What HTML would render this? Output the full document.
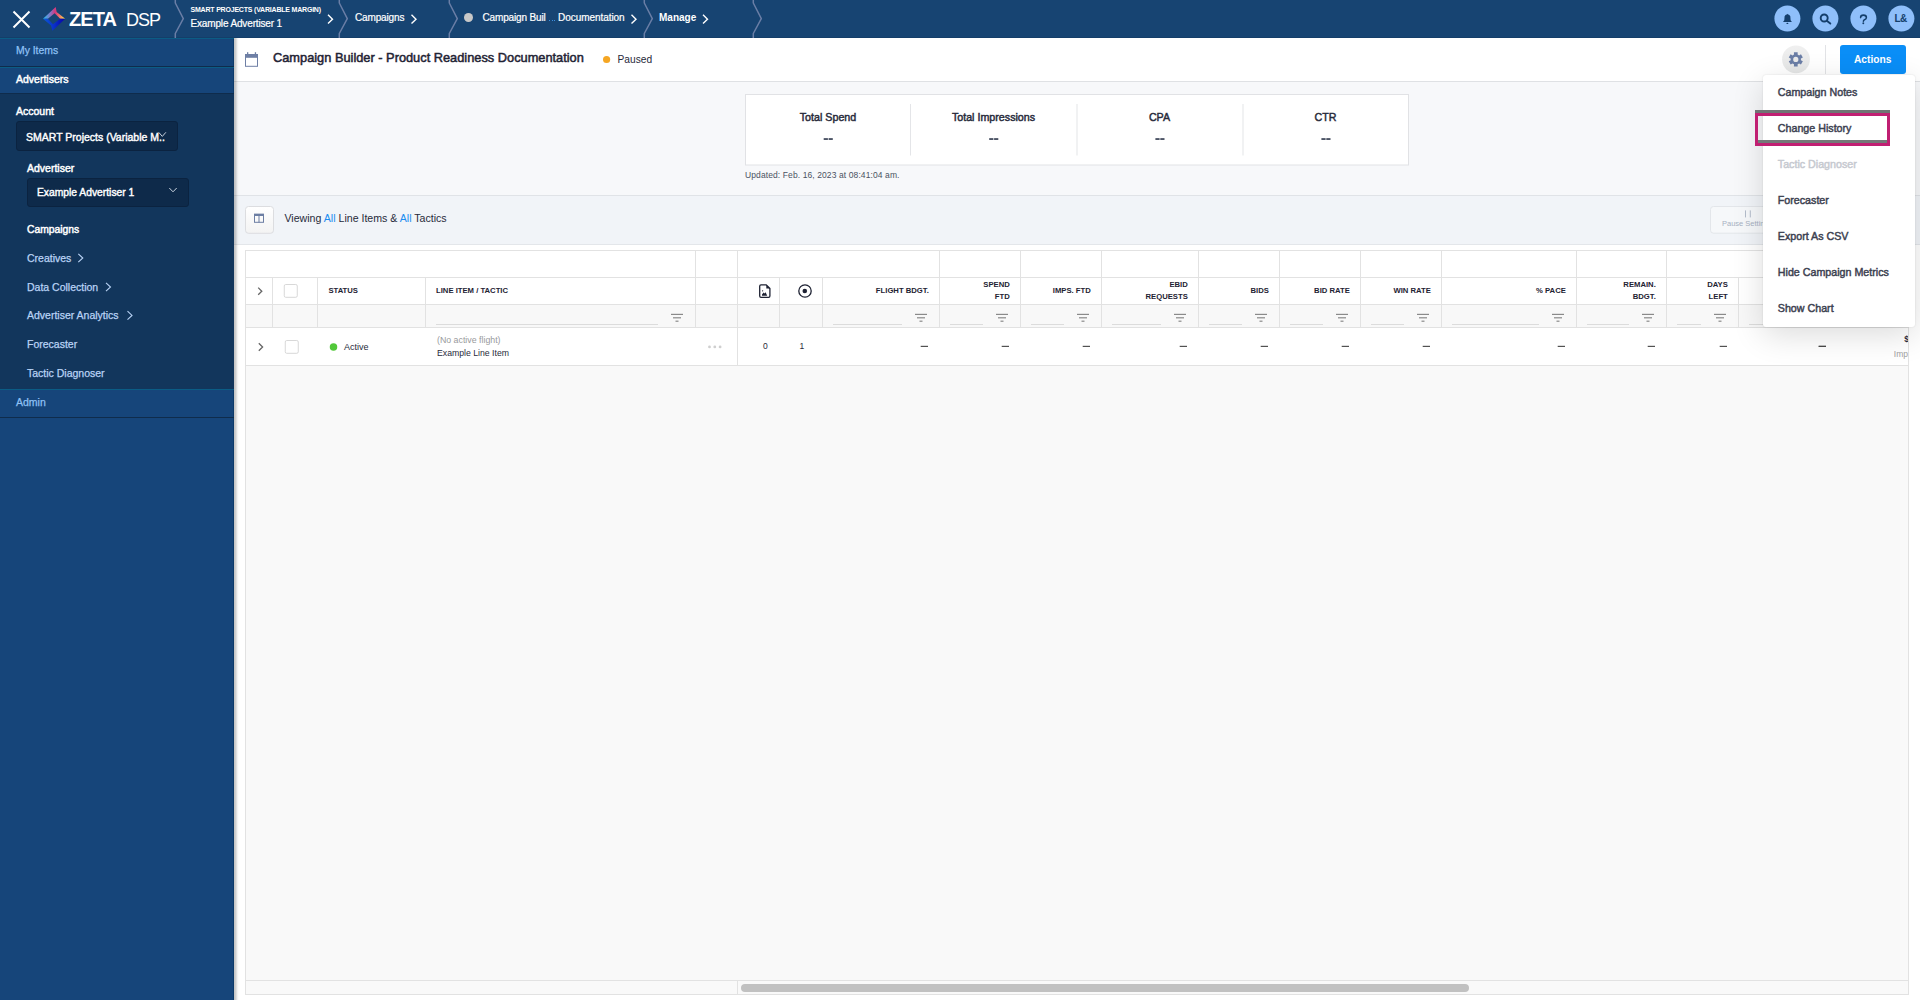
<!DOCTYPE html>
<html><head><meta charset="utf-8">
<style>
*{box-sizing:border-box;margin:0;padding:0}
html,body{width:1920px;height:1000px;overflow:hidden;background:#fff;font-family:"Liberation Sans",sans-serif;color:#272a3a}
.a{position:absolute;white-space:nowrap}
.t{line-height:1}
.c{transform:translateX(-50%)}
.h1{font-size:7.7px;font-weight:700;color:#1e2233}
.h2{font-size:7.7px;font-weight:700;color:#1e2233;line-height:12px;text-align:right}
.dd{left:1777.8px;font-size:10.7px;color:#3c4150;-webkit-text-stroke:0.45px currentColor}
#hdr{position:absolute;left:0;top:0;width:1920px;height:38px;background:#174472}
#side{position:absolute;left:0;top:38px;width:234px;height:962px;background:#16457a}
#main{position:absolute;left:234px;top:38px;width:1686px;height:962px;background:#fff}
</style></head><body>
<div id="hdr">
 <div class="a" style="left:0;top:37px;width:1920px;height:1px;background:#143e69"></div>
 <svg class="a" style="left:0;top:0" width="780" height="38" viewBox="0 0 780 38">
  <defs>
   <linearGradient id="lgT" x1="0" y1="0" x2="1" y2="0">
    <stop offset="0" stop-color="#22c4f5"/><stop offset="0.35" stop-color="#8a6fc0"/><stop offset="0.55" stop-color="#d6357a"/><stop offset="0.75" stop-color="#f07a6a"/><stop offset="1" stop-color="#fff23a"/>
   </linearGradient>
   <linearGradient id="lgB" x1="0" y1="0" x2="1" y2="0">
    <stop offset="0" stop-color="#0b5ad8"/><stop offset="0.5" stop-color="#0a2fc8"/><stop offset="1" stop-color="#0800a8"/>
   </linearGradient>
  </defs>
  <path d="M13.5 11.5 L29.5 27.5 M29.5 11.5 L13.5 27.5" stroke="#fff" stroke-width="2" fill="none"/>
  <path d="M43 18.7 L55.7 7 L56.6 12 L65.2 18.7 L60.2 18.7 L54.6 13.2 L47.9 18.7 Z" fill="url(#lgT)"/>
  <path d="M43 18.7 L47.9 18.7 L53 24.2 L60.2 18.7 L65.2 18.7 L52.4 30.7 L51 25.6 Z" fill="url(#lgB)"/>
  <g stroke="#6a7ea6" stroke-width="1.5" fill="none" stroke-linejoin="round"><path d="M175.3 -1 L175.3 3 L183.3 18.7 L175.3 33.5 L175.3 39"/><path d="M339.3 -1 L339.3 3 L347.3 18.7 L339.3 33.5 L339.3 39"/><path d="M449.3 -1 L449.3 3 L457.3 18.7 L449.3 33.5 L449.3 39"/><path d="M644.3 -1 L644.3 3 L652.3 18.7 L644.3 33.5 L644.3 39"/><path d="M753.3 -1 L753.3 3 L761.3 18.7 L753.3 33.5 L753.3 39"/></g>
  <g stroke="#fff" stroke-width="1.4" fill="none">
   <path d="M328 14.8 L332.5 19.2 L328 23.6"/>
   <path d="M411.5 14.8 L416 19.2 L411.5 23.6"/>
   <path d="M631.5 14.8 L636 19.2 L631.5 23.6"/>
   <path d="M703 14.8 L707.5 19.2 L703 23.6"/>
  </g>
  <circle cx="468.5" cy="17.5" r="4.5" fill="#c8c8c8"/>
 </svg>
 <div class="a t" style="left:69px;top:9px;font-size:20px;font-weight:700;color:#fff;letter-spacing:-0.9px">ZETA</div>
 <div class="a t" style="left:126px;top:11px;font-size:18px;color:#fff;letter-spacing:-1px">DSP</div>
 <div class="a t" style="left:190.5px;top:6px;font-size:7px;font-weight:700;color:#fff;letter-spacing:-0.2px">SMART PROJECTS (VARIABLE MARGIN)</div>
 <div class="a t" style="left:190.5px;top:18.5px;font-size:10px;color:#fff;letter-spacing:-0.15px;-webkit-text-stroke:0.2px #fff">Example Advertiser 1</div>
 <div class="a t" style="left:355px;top:12.5px;font-size:10px;color:#fff;letter-spacing:-0.15px;-webkit-text-stroke:0.2px #fff">Campaigns</div>
 <div class="a t" style="left:482.5px;top:12.5px;font-size:10px;color:#fff;letter-spacing:-0.15px;-webkit-text-stroke:0.2px #fff">Campaign Buil</div><div class="a t" style="left:558px;top:12.5px;font-size:10px;color:#fff;letter-spacing:-0.05px;-webkit-text-stroke:0.2px #fff">Documentation</div><div class="a" style="left:549px;top:20px;width:6.5px;height:1.2px;background:repeating-linear-gradient(to right,#3d8fe0 0 1.3px,transparent 1.3px 2.6px)"></div>
 <div class="a t" style="left:659px;top:12.5px;font-size:10px;font-weight:700;color:#fff">Manage</div>
 <svg class="a" style="left:1770px;top:0" width="150" height="38" viewBox="1770 0 150 38">
  <g fill="#8fbffa">
   <circle cx="1787.4" cy="18.5" r="13"/><circle cx="1825.4" cy="18.5" r="13"/><circle cx="1863.4" cy="18.5" r="13"/><circle cx="1901.4" cy="18.5" r="13"/>
  </g>
  <path d="M1783 21.9 L1791.9 21.9 L1790.6 20.2 L1790.3 16.3 Q1789.6 14.6 1787.8 14.2 L1787.5 13.8 L1787.1 14.2 Q1785.2 14.6 1784.6 16.3 L1784.3 20.2 Z" fill="#143e6b"/>
  <ellipse cx="1787.4" cy="23.4" rx="1" ry="0.6" fill="#143e6b"/>
  <circle cx="1824.2" cy="18" r="3.5" stroke="#143e6b" stroke-width="1.9" fill="none"/>
  <path d="M1826.8 20.8 L1830.3 23.6" stroke="#143e6b" stroke-width="1.9" stroke-linecap="round"/>
 </svg>
 <svg class="a" style="left:1855px;top:10px" width="16" height="18" viewBox="1855 10 16 18"><path d="M1860.6 17.6 Q1860.6 15.1 1863.4 15.1 Q1866.4 15.1 1866.4 17.4 Q1866.4 19 1864.5 19.7 Q1863.4 20.2 1863.4 21.3" stroke="#143e6b" stroke-width="1.55" fill="none" stroke-linecap="round"/><circle cx="1863.3" cy="23.2" r="0.95" fill="#143e6b"/></svg>
 <div class="a t" style="left:1894.5px;top:13.5px;font-size:10px;font-weight:700;color:#143e6b;letter-spacing:-0.5px">L&amp;</div>
</div>
<div id="side">
 <div class="a" style="left:233px;top:0;width:1px;height:962px;background:#0c3a6a"></div>
 <div class="a" style="left:0;top:0;width:234px;height:1px;background:#0b5c85"></div>
 <div class="a" style="left:0;top:28px;width:234px;height:1px;background:#0f2c4c"></div>
 <div class="a" style="left:0;top:29px;width:234px;height:1px;background:#0b5c85"></div>
 <div class="a" style="left:0;top:55px;width:234px;height:1px;background:#0f2c4c"></div>
 <div class="a" style="left:0;top:56px;width:234px;height:295px;background:#12365c"></div>
 <div class="a" style="left:0;top:351px;width:234px;height:1px;background:#0b5c85"></div>
 <div class="a" style="left:0;top:379px;width:234px;height:1px;background:#0f2c4c"></div>
 <div class="a" style="left:16px;top:83px;width:162px;height:30px;background:#0e2a4a;border:1px solid #0b2340;border-radius:3px"></div>
 <div class="a" style="left:27px;top:139.5px;width:162px;height:29.5px;background:#0e2a4a;border:1px solid #0b2340;border-radius:3px"></div>
</div>
<div class="a t" style="left:16px;top:46.2px;font-size:10.4px;color:#8ec1f5;-webkit-text-stroke:0.25px currentColor">My Items</div>
<div class="a t" style="left:16px;top:74.2px;font-size:10.5px;color:#fff;-webkit-text-stroke:0.45px #fff">Advertisers</div>
<div class="a t" style="left:16px;top:106.2px;font-size:10.5px;color:#fff;-webkit-text-stroke:0.45px #fff">Account</div>
<div class="a t" style="left:26px;top:131.6px;font-size:10.5px;color:#fff;-webkit-text-stroke:0.4px currentColor">SMART Projects (Variable M..</div>
<div class="a t" style="left:27px;top:163.2px;font-size:10.5px;color:#fff;-webkit-text-stroke:0.45px #fff">Advertiser</div>
<div class="a t" style="left:37px;top:188px;font-size:10.3px;color:#fff;-webkit-text-stroke:0.4px currentColor">Example Advertiser 1</div>
<div class="a t" style="left:27px;top:224.6px;font-size:10.3px;color:#fff;-webkit-text-stroke:0.45px #fff">Campaigns</div>
<div class="a t" style="left:27px;top:253.1px;font-size:10.5px;color:#b9d3f5;-webkit-text-stroke:0.25px currentColor">Creatives</div>
<div class="a t" style="left:27px;top:282.1px;font-size:10.5px;color:#b9d3f5;-webkit-text-stroke:0.25px currentColor">Data Collection</div>
<div class="a t" style="left:27px;top:310.4px;font-size:10.5px;color:#b9d3f5;-webkit-text-stroke:0.25px currentColor">Advertiser Analytics</div>
<div class="a t" style="left:27px;top:339.3px;font-size:10.5px;color:#b9d3f5;-webkit-text-stroke:0.25px currentColor">Forecaster</div>
<div class="a t" style="left:27px;top:368.2px;font-size:10.5px;color:#b9d3f5;-webkit-text-stroke:0.25px currentColor">Tactic Diagnoser</div>
<div class="a t" style="left:16px;top:397px;font-size:10.5px;color:#8ec1f5;-webkit-text-stroke:0.25px currentColor">Admin</div>
<svg class="a" style="left:0;top:0" width="234" height="420" viewBox="0 0 234 420">
 <g stroke="#b9d3f5" stroke-width="1.1" fill="none">
  <path d="M78.3 253.8 L82.8 258 L78.3 262.2"/>
  <path d="M106 282.8 L110.5 287 L106 291.2"/>
  <path d="M127.5 311.2 L132 315.4 L127.5 319.6"/>
 </g>
 <g stroke="#c9d3df" stroke-width="1" fill="none">
  <path d="M158.7 132.3 L162.3 136.4 L165.9 132.3"/>
  <path d="M169.3 188 L173 191.8 L176.7 188"/>
 </g>
</svg>
<div id="main">
  <div class="a" style="left:0;top:43px;width:1686px;height:1px;background:#dfe1e4"></div>
 <div class="a" style="left:0;top:44px;width:1686px;height:113px;background:#f7f8fa"></div>
 <div class="a" style="left:0;top:157px;width:1686px;height:1px;background:#e0e3e7"></div>
 <div class="a" style="left:0;top:158px;width:1686px;height:48px;background:#f1f4f8"></div>
 <div class="a" style="left:0;top:206px;width:1686px;height:1px;background:#e3e6ea"></div>
<div class="a" style="left:0;top:0;width:7px;height:962px;background:linear-gradient(to right,rgba(0,0,0,0.24),rgba(0,0,0,0.19) 1.5px,rgba(0,0,0,0.12) 2.5px,rgba(0,0,0,0.05) 3.5px,rgba(0,0,0,0.015) 4.5px,rgba(0,0,0,0) 6px)"></div>
</div>
<svg class="a" style="left:0;top:0" width="1920" height="240" viewBox="0 0 1920 240">
 <g fill="#6e7fa5">
  <rect x="245.5" y="54.5" width="12" height="11.8" fill="none" stroke="#6e7fa5" stroke-width="1"/>
  <rect x="245" y="54" width="13" height="3.8"/>
  <rect x="247" y="52.2" width="1.3" height="2.2"/><rect x="254.8" y="52.2" width="1.3" height="2.2"/>
 </g>
 <circle cx="606.6" cy="59.5" r="3.6" fill="#f5a623"/>
 <defs><linearGradient id="gg" x1="0" y1="0" x2="0" y2="1"><stop offset="0" stop-color="#f0f0f0"/><stop offset="1" stop-color="#e5e6e6"/></linearGradient>
 <linearGradient id="bg1" x1="0" y1="0" x2="0" y2="1"><stop offset="0" stop-color="#ffffff"/><stop offset="1" stop-color="#f3f3f3"/></linearGradient></defs>
 <circle cx="1796" cy="59.3" r="13.9" fill="url(#gg)"/>
 <path fill-rule="evenodd" fill="#6b7ea6" d="M1793.97 54.53 L1793.92 52.35 L1797.68 52.35 L1797.63 54.53 L1799.10 55.38 L1800.97 54.25 L1802.85 57.50 L1800.93 58.55 L1800.93 60.25 L1802.85 61.30 L1800.97 64.55 L1799.10 63.42 L1797.63 64.27 L1797.68 66.45 L1793.92 66.45 L1793.97 64.27 L1792.50 63.42 L1790.63 64.55 L1788.75 61.30 L1790.67 60.25 L1790.67 58.55 L1788.75 57.50 L1790.63 54.25 L1792.50 55.38 Z M1798.40 59.40 A2.6 2.6 0 1 0 1793.20 59.40 A2.6 2.6 0 1 0 1798.40 59.40 Z"/>
 <rect x="1825" y="45" width="1" height="29" fill="#e2e3e6"/>
 <rect x="1840" y="45" width="66" height="29" rx="3" fill="#0a8ef7"/>
 <rect x="745.5" y="94.5" width="663" height="70.5" fill="#fff" stroke="#e1e2e5" stroke-width="1"/>
 <g fill="#e4e5e8"><rect x="910" y="104" width="1" height="51.5"/><rect x="1076.5" y="104" width="1" height="51.5"/><rect x="1242.5" y="104" width="1" height="51.5"/></g>
 <g fill="#4d5566"><rect x="823.7" y="138.1" width="4.2" height="1.9"/><rect x="828.6" y="138.1" width="4.2" height="1.9"/><rect x="989.2" y="138.1" width="4.2" height="1.9"/><rect x="994.1" y="138.1" width="4.2" height="1.9"/><rect x="1155.4" y="138.1" width="4.2" height="1.9"/><rect x="1160.3" y="138.1" width="4.2" height="1.9"/><rect x="1321.4" y="138.1" width="4.2" height="1.9"/><rect x="1326.3" y="138.1" width="4.2" height="1.9"/></g>
 <rect x="245.5" y="206.5" width="28" height="26.8" rx="3" fill="url(#bg1)" stroke="#dcdde0" stroke-width="1"/>
 <g fill="#6c7ea3">
  <rect x="254.5" y="214.3" width="9" height="8" fill="none" stroke="#6c7ea3" stroke-width="1"/>
  <rect x="254" y="213.8" width="10" height="2.2"/>
  <rect x="258.5" y="215" width="1" height="7.5"/>
 </g>
 <rect x="1710.5" y="206.5" width="80" height="26.7" rx="3" fill="#f6f8fa" stroke="#e3e6ea" stroke-width="1"/>
 <g fill="#b3bccb"><rect x="1745" y="210.4" width="1" height="7"/><rect x="1749.8" y="210.4" width="1" height="7"/></g>
</svg>
<div class="a t" style="left:273px;top:52.3px;font-size:12.8px;color:#1f2334;-webkit-text-stroke:0.5px #1f2334">Campaign Builder - Product Readiness Documentation</div>
<div class="a t" style="left:617.5px;top:55.4px;font-size:10.2px;color:#272a3a">Paused</div>
<div class="a t" style="left:1854px;top:55.4px;font-size:10.2px;font-weight:700;color:#fff">Actions</div>
<div class="a t c" style="left:828px;top:112.2px;font-size:10.7px;color:#272a3a;-webkit-text-stroke:0.45px #272a3a">Total Spend</div>
<div class="a t c" style="left:993.5px;top:112.2px;font-size:10.7px;color:#272a3a;-webkit-text-stroke:0.45px #272a3a">Total Impressions</div>
<div class="a t c" style="left:1159.5px;top:112.2px;font-size:10.7px;color:#272a3a;-webkit-text-stroke:0.45px #272a3a">CPA</div>
<div class="a t c" style="left:1325.5px;top:112.2px;font-size:10.7px;color:#272a3a;-webkit-text-stroke:0.45px #272a3a">CTR</div>
<div class="a t" style="left:745px;top:170.8px;font-size:8.5px;color:#4a5262;letter-spacing:0.1px">Updated: Feb. 16, 2023 at 08:41:04 am.</div>
<div class="a t" style="left:284.5px;top:212.8px;font-size:10.6px;color:#272a3a">Viewing <span style="color:#1a8cf0">All</span> Line Items &amp; <span style="color:#1a8cf0">All</span> Tactics</div>
<div class="a t" style="left:1722px;top:219.5px;font-size:7.5px;color:#a7b1c2">Pause Settings</div>
<svg class="a" style="left:0;top:0" width="1920" height="1000" viewBox="0 0 1920 1000"><rect x="245" y="250" width="1663" height="745" fill="#f9f9f9"/><rect x="245" y="250" width="1663" height="54" fill="#fff"/><rect x="245" y="304" width="1663" height="23" fill="#f8f8f8"/><rect x="245" y="327" width="1663" height="38" fill="#ffffff"/><rect x="245" y="250" width="1664" height="1" fill="#e2e2e2"/><rect x="245" y="277" width="1664" height="1" fill="#e2e2e2"/><rect x="245" y="304" width="1664" height="1" fill="#e2e2e2"/><rect x="245" y="327" width="1664" height="1" fill="#e2e2e2"/><rect x="245" y="365" width="1664" height="1" fill="#e2e2e2"/><rect x="245" y="980" width="1664" height="1" fill="#e2e2e2"/><rect x="245" y="994" width="1664" height="1" fill="#e2e2e2"/><rect x="245" y="250" width="1" height="745" fill="#e2e2e2"/><rect x="1908" y="250" width="1" height="745" fill="#e2e2e2"/><rect x="695" y="250" width="1" height="27" fill="#e2e2e2"/><rect x="737" y="250" width="1" height="27" fill="#e2e2e2"/><rect x="939" y="250" width="1" height="27" fill="#e2e2e2"/><rect x="1020" y="250" width="1" height="27" fill="#e2e2e2"/><rect x="1101" y="250" width="1" height="27" fill="#e2e2e2"/><rect x="1198" y="250" width="1" height="27" fill="#e2e2e2"/><rect x="1279" y="250" width="1" height="27" fill="#e2e2e2"/><rect x="1360" y="250" width="1" height="27" fill="#e2e2e2"/><rect x="1441" y="250" width="1" height="27" fill="#e2e2e2"/><rect x="1576" y="250" width="1" height="27" fill="#e2e2e2"/><rect x="1666" y="250" width="1" height="27" fill="#e2e2e2"/><rect x="1837" y="250" width="1" height="27" fill="#e2e2e2"/><rect x="272" y="277" width="1" height="50" fill="#e2e2e2"/><rect x="317" y="277" width="1" height="50" fill="#e2e2e2"/><rect x="425" y="277" width="1" height="50" fill="#e2e2e2"/><rect x="695" y="277" width="1" height="50" fill="#e2e2e2"/><rect x="737" y="277" width="1" height="50" fill="#e2e2e2"/><rect x="779" y="277" width="1" height="50" fill="#e2e2e2"/><rect x="822" y="277" width="1" height="50" fill="#e2e2e2"/><rect x="939" y="277" width="1" height="50" fill="#e2e2e2"/><rect x="1020" y="277" width="1" height="50" fill="#e2e2e2"/><rect x="1101" y="277" width="1" height="50" fill="#e2e2e2"/><rect x="1198" y="277" width="1" height="50" fill="#e2e2e2"/><rect x="1279" y="277" width="1" height="50" fill="#e2e2e2"/><rect x="1360" y="277" width="1" height="50" fill="#e2e2e2"/><rect x="1441" y="277" width="1" height="50" fill="#e2e2e2"/><rect x="1576" y="277" width="1" height="50" fill="#e2e2e2"/><rect x="1666" y="277" width="1" height="50" fill="#e2e2e2"/><rect x="1738" y="277" width="1" height="50" fill="#e2e2e2"/><rect x="1837" y="277" width="1" height="50" fill="#e2e2e2"/><rect x="737" y="327" width="1" height="38" fill="#e2e2e2"/><rect x="737" y="980" width="1" height="14" fill="#e2e2e2"/><rect x="741" y="984" width="728" height="8" rx="4" fill="#c1c1c1"/><rect x="436" y="324" width="222" height="1" fill="#dcdcdc"/><rect x="671" y="313.8" width="12" height="1.2" fill="#8a8a8a"/><rect x="673" y="317.2" width="8" height="1.2" fill="#8a8a8a"/><rect x="675.5" y="320.6" width="3" height="1.2" fill="#8a8a8a"/><rect x="833" y="324" width="69" height="1" fill="#dcdcdc"/><rect x="915" y="313.8" width="12" height="1.2" fill="#8a8a8a"/><rect x="917" y="317.2" width="8" height="1.2" fill="#8a8a8a"/><rect x="919.5" y="320.6" width="3" height="1.2" fill="#8a8a8a"/><rect x="950" y="324" width="33" height="1" fill="#dcdcdc"/><rect x="996" y="313.8" width="12" height="1.2" fill="#8a8a8a"/><rect x="998" y="317.2" width="8" height="1.2" fill="#8a8a8a"/><rect x="1000.5" y="320.6" width="3" height="1.2" fill="#8a8a8a"/><rect x="1031" y="324" width="33" height="1" fill="#dcdcdc"/><rect x="1077" y="313.8" width="12" height="1.2" fill="#8a8a8a"/><rect x="1079" y="317.2" width="8" height="1.2" fill="#8a8a8a"/><rect x="1081.5" y="320.6" width="3" height="1.2" fill="#8a8a8a"/><rect x="1112" y="324" width="49" height="1" fill="#dcdcdc"/><rect x="1174" y="313.8" width="12" height="1.2" fill="#8a8a8a"/><rect x="1176" y="317.2" width="8" height="1.2" fill="#8a8a8a"/><rect x="1178.5" y="320.6" width="3" height="1.2" fill="#8a8a8a"/><rect x="1209" y="324" width="33" height="1" fill="#dcdcdc"/><rect x="1255" y="313.8" width="12" height="1.2" fill="#8a8a8a"/><rect x="1257" y="317.2" width="8" height="1.2" fill="#8a8a8a"/><rect x="1259.5" y="320.6" width="3" height="1.2" fill="#8a8a8a"/><rect x="1290" y="324" width="33" height="1" fill="#dcdcdc"/><rect x="1336" y="313.8" width="12" height="1.2" fill="#8a8a8a"/><rect x="1338" y="317.2" width="8" height="1.2" fill="#8a8a8a"/><rect x="1340.5" y="320.6" width="3" height="1.2" fill="#8a8a8a"/><rect x="1371" y="324" width="33" height="1" fill="#dcdcdc"/><rect x="1417" y="313.8" width="12" height="1.2" fill="#8a8a8a"/><rect x="1419" y="317.2" width="8" height="1.2" fill="#8a8a8a"/><rect x="1421.5" y="320.6" width="3" height="1.2" fill="#8a8a8a"/><rect x="1452" y="324" width="87" height="1" fill="#dcdcdc"/><rect x="1552" y="313.8" width="12" height="1.2" fill="#8a8a8a"/><rect x="1554" y="317.2" width="8" height="1.2" fill="#8a8a8a"/><rect x="1556.5" y="320.6" width="3" height="1.2" fill="#8a8a8a"/><rect x="1587" y="324" width="42" height="1" fill="#dcdcdc"/><rect x="1642" y="313.8" width="12" height="1.2" fill="#8a8a8a"/><rect x="1644" y="317.2" width="8" height="1.2" fill="#8a8a8a"/><rect x="1646.5" y="320.6" width="3" height="1.2" fill="#8a8a8a"/><rect x="1677" y="324" width="24" height="1" fill="#dcdcdc"/><rect x="1714" y="313.8" width="12" height="1.2" fill="#8a8a8a"/><rect x="1716" y="317.2" width="8" height="1.2" fill="#8a8a8a"/><rect x="1718.5" y="320.6" width="3" height="1.2" fill="#8a8a8a"/><rect x="1749" y="324" width="51" height="1" fill="#dcdcdc"/><rect x="1813" y="313.8" width="12" height="1.2" fill="#8a8a8a"/><rect x="1815" y="317.2" width="8" height="1.2" fill="#8a8a8a"/><rect x="1817.5" y="320.6" width="3" height="1.2" fill="#8a8a8a"/><rect x="1749" y="324" width="51" height="1" fill="#dcdcdc"/><rect x="1813" y="313.8" width="12" height="1.2" fill="#8a8a8a"/><rect x="1815" y="317.2" width="8" height="1.2" fill="#8a8a8a"/><rect x="1817.5" y="320.6" width="3" height="1.2" fill="#8a8a8a"/><rect x="920.7" y="345.8" width="7.3" height="1.15" fill="#4a4a4a"/><rect x="1001.7" y="345.8" width="7.3" height="1.15" fill="#4a4a4a"/><rect x="1082.7" y="345.8" width="7.3" height="1.15" fill="#4a4a4a"/><rect x="1179.7" y="345.8" width="7.3" height="1.15" fill="#4a4a4a"/><rect x="1260.7" y="345.8" width="7.3" height="1.15" fill="#4a4a4a"/><rect x="1341.7" y="345.8" width="7.3" height="1.15" fill="#4a4a4a"/><rect x="1422.7" y="345.8" width="7.3" height="1.15" fill="#4a4a4a"/><rect x="1557.7" y="345.8" width="7.3" height="1.15" fill="#4a4a4a"/><rect x="1647.7" y="345.8" width="7.3" height="1.15" fill="#4a4a4a"/><rect x="1719.7" y="345.8" width="7.3" height="1.15" fill="#4a4a4a"/><rect x="1818.7" y="345.8" width="7.3" height="1.15" fill="#4a4a4a"/><rect x="1818.7" y="345.8" width="7.3" height="1.15" fill="#4a4a4a"/><path d="M258.2 287.6 L261.8 291.2 L258.2 294.8" stroke="#666" stroke-width="1.3" fill="none"/><path d="M258.8 343.2 L262.6 347 L258.8 350.8" stroke="#666" stroke-width="1.3" fill="none"/><rect x="284.25" y="284.5" width="13" height="12.8" rx="1.5" fill="#fff" stroke="#d8d8d8" stroke-width="1"/><rect x="285.25" y="340.5" width="13" height="12.8" rx="1.5" fill="#fff" stroke="#d8d8d8" stroke-width="1"/><circle cx="333.5" cy="347" r="3.75" fill="#52c83a"/><circle cx="709.5" cy="346.9" r="1.4" fill="#cfcfcf"/><circle cx="714.8" cy="346.9" r="1.4" fill="#cfcfcf"/><circle cx="720.1" cy="346.9" r="1.4" fill="#cfcfcf"/><path d="M761 284.9 L766.3 284.9 L769.9 288.5 L769.9 296.1 Q769.9 297.4 768.6 297.4 L761 297.4 Q759.7 297.4 759.7 296.1 L759.7 286.2 Q759.7 284.9 761 284.9 Z" fill="none" stroke="#1e2233" stroke-width="1.3" stroke-linejoin="round"/><path d="M766.3 284.8 L770 288.5 L766.3 288.5 Z" fill="#1e2233"/><path d="M762 295.7 L762 294.4 L763.6 292.6 L764.6 293.6 L765.6 292.3 L767.2 295.7 Z" fill="#1e2233"/><circle cx="762.6" cy="290.8" r="0.65" fill="#1e2233"/><circle cx="805" cy="291" r="6.2" fill="none" stroke="#1e2233" stroke-width="1.3"/><circle cx="804.8" cy="291" r="2.3" fill="#1e2233"/></svg>
<div class="a t h1" style="left:328.4px;top:286.5px">STATUS</div>
<div class="a t h1" style="left:436px;top:286.5px">LINE ITEM / TACTIC</div>
<div class="a t h1" style="right:991.2px;top:286.5px">FLIGHT BDGT.</div>
<div class="a t h2" style="right:910.2px;top:278.6px">SPEND<br>FTD</div>
<div class="a t h1" style="right:829.2px;top:286.5px">IMPS. FTD</div>
<div class="a t h2" style="right:732.2px;top:278.6px">EBID<br>REQUESTS</div>
<div class="a t h1" style="right:651.2px;top:286.5px">BIDS</div>
<div class="a t h1" style="right:570.2px;top:286.5px">BID RATE</div>
<div class="a t h1" style="right:489.2px;top:286.5px">WIN RATE</div>
<div class="a t h1" style="right:354.2px;top:286.5px">% PACE</div>
<div class="a t h2" style="right:264.2px;top:278.6px">REMAIN.<br>BDGT.</div>
<div class="a t h2" style="right:192.2px;top:278.6px">DAYS<br>LEFT</div>
<div class="a t" style="left:344px;top:342.5px;font-size:9px;color:#272a3a">Active</div>
<div class="a t" style="left:437px;top:336px;font-size:8.8px;color:#999a9c">(No active flight)</div>
<div class="a t" style="left:437px;top:349px;font-size:8.7px;color:#272a3a">Example Line Item</div>
<div class="a t" style="left:763px;top:341.8px;font-size:8.5px;color:#272a3a">0</div>
<div class="a t" style="left:799.5px;top:341.8px;font-size:8.5px;color:#272a3a">1</div>
<div class="a" style="left:1880px;top:330px;width:28px;height:34px;overflow:hidden"><div class="a t" style="right:-1px;top:5px;font-size:8.5px;font-weight:700;color:#272a3a">$</div><div class="a t" style="left:13.8px;top:19.5px;font-size:8.5px;color:#a0a0a0">Imp</div></div><div class="a" style="left:1762.5px;top:74.5px;width:152.5px;height:252.5px;background:#fff;border-radius:3px;box-shadow:0 8px 32px rgba(0,0,0,0.14),0 0 2px rgba(0,0,0,0.12)"></div>
<div class="a t dd" style="top:86.8px">Campaign Notes</div>
<div class="a t dd" style="top:122.8px">Change History</div>
<div class="a t dd" style="top:158.8px;color:#c6c9d0">Tactic Diagnoser</div>
<div class="a t dd" style="top:194.8px">Forecaster</div>
<div class="a t dd" style="top:230.8px">Export As CSV</div>
<div class="a t dd" style="top:266.8px;letter-spacing:0">Hide Campaign Metrics</div>
<div class="a t dd" style="top:302.8px">Show Chart</div>
<div class="a" style="left:1755px;top:110px;width:135px;height:3.2px;background:#6f7474;filter:blur(0.35px)"></div>
<div class="a" style="left:1758px;top:139.8px;width:129px;height:3.2px;background:#737878;filter:blur(0.35px)"></div>

<div class="a" style="left:1755px;top:113px;width:135px;height:33px;border:3px solid #c01f72"></div></body></html>
